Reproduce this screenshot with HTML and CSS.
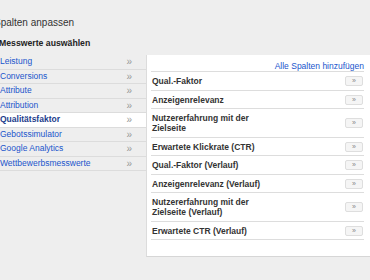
FILE: index.html
```html
<!DOCTYPE html>
<html lang="de">
<head>
    <meta charset="UTF-8">
    <title>Spalten anpassen</title>
    <link rel="stylesheet" href="styles.css">
</head>
<body>
    <div class="page">
        <h1 class="title">Spalten anpassen</h1>
        <h2 class="subtitle">Messwerte auswählen</h2>

        <div class="layout">
            <ul class="nav">
                <li class="nav-item"><span>Leistung</span><span class="arrow">»</span></li>
                <li class="nav-item"><span>Conversions</span><span class="arrow">»</span></li>
                <li class="nav-item"><span>Attribute</span><span class="arrow">»</span></li>
                <li class="nav-item"><span>Attribution</span><span class="arrow">»</span></li>
                <li class="nav-item active"><span>Qualitätsfaktor</span><span class="arrow">»</span></li>
                <li class="nav-item"><span>Gebotssimulator</span><span class="arrow">»</span></li>
                <li class="nav-item"><span>Google Analytics</span><span class="arrow">»</span></li>
                <li class="nav-item"><span>Wettbewerbsmesswerte</span><span class="arrow">»</span></li>
            </ul>

            <div class="panel">
                <div class="panel-head"><a href="#" class="add-all">Alle Spalten hinzufügen</a></div>
                <div class="metric"><span class="metric-name">Qual.-Faktor</span><button class="add-btn">»</button></div>
                <div class="metric"><span class="metric-name">Anzeigenrelevanz</span><button class="add-btn">»</button></div>
                <div class="metric"><span class="metric-name">Nutzererfahrung mit der Zielseite</span><button class="add-btn">»</button></div>
                <div class="metric"><span class="metric-name">Erwartete Klickrate (CTR)</span><button class="add-btn">»</button></div>
                <div class="metric"><span class="metric-name">Qual.-Faktor (Verlauf)</span><button class="add-btn">»</button></div>
                <div class="metric"><span class="metric-name">Anzeigenrelevanz (Verlauf)</span><button class="add-btn">»</button></div>
                <div class="metric"><span class="metric-name">Nutzererfahrung mit der Zielseite (Verlauf)</span><button class="add-btn">»</button></div>
                <div class="metric"><span class="metric-name">Erwartete CTR (Verlauf)</span><button class="add-btn">»</button></div>
            </div>
        </div>
    </div>
</body>
</html>
```

FILE: styles.css
```css
* {
    box-sizing: border-box;
    margin: 0;
    padding: 0;
}
body {
    font-family: "Liberation Sans", Arial, sans-serif;
    background-color: #eeeeee;
    color: #333;
    overflow: hidden;
}
.page {
    padding-top: 17px;
}
.title {
    font-size: 10px;
    line-height: 12px;
    font-weight: normal;
    color: #333;
    margin-left: -6px;
}
.subtitle {
    font-size: 8.7px;
    line-height: 11px;
    font-weight: bold;
    color: #222;
    margin: 9px 0 6px -1px;
}
.layout {
    display: flex;
    align-items: flex-start;
}
.nav {
    list-style: none;
    width: 146px;
    flex: 0 0 146px;
}
.nav-item {
    display: flex;
    justify-content: space-between;
    font-size: 8.5px;
    line-height: 13.5px;
    color: #1a55cc;
    border-bottom: 1px solid #dcdcdc;
    padding-right: 14px;
}
.nav-item .arrow {
    color: #999;
    font-size: 10px;
    font-weight: normal;
}
.nav-item.active {
    background: #fff;
    color: #1d3d8c;
    font-weight: bold;
}
.panel {
    flex: 1;
    background: #fff;
    border-left: 1px solid #dcdcdc;
    border-bottom: 1px solid #d6d6d6;
    padding: 0 6px 16px 4px;
}
.panel-head {
    height: 17.3px;
    line-height: 17px;
    text-align: right;
    border-bottom: 1px solid #dddddd;
}
.add-all {
    font-size: 8.5px;
    color: #1a55cc;
    text-decoration: none;
}
.metric {
    display: flex;
    align-items: center;
    justify-content: space-between;
    padding: 3.75px 1px;
    border-bottom: 1px solid #dddddd;
}
.metric-name {
    font-size: 8.5px;
    line-height: 10px;
    font-weight: bold;
    color: #333;
    max-width: 125px;
}
.add-btn {
    width: 18px;
    height: 10px;
    border: 1px solid #dedede;
    border-radius: 2px;
    background: #f5f5f5;
    color: #888;
    font-family: "Liberation Sans", Arial, sans-serif;
    font-size: 7px;
    line-height: 8px;
}
```
